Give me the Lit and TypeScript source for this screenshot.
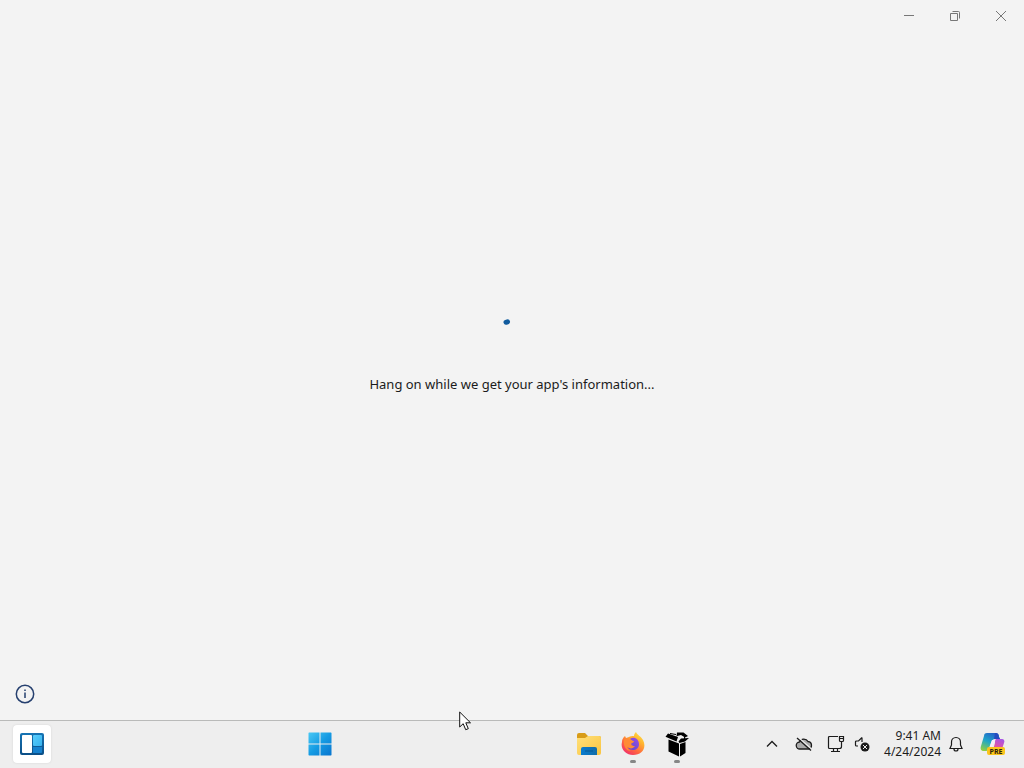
import { LitElement, html, css } from "lit";
import { customElement } from "lit/decorators.js";

@customElement("window-controls")
class WindowControls extends LitElement {
  static styles = css`
    :host { display: flex; justify-content: flex-end; height: 32px; }
    .control { display: grid; place-items: center; width: 46px; padding: 0; border: 0; background: none; }
    .control:hover { background: #e5e5e5; }
    svg { display: block; fill: none; stroke: #777; stroke-width: 1; }
  `;
  render() {
    return html`
      <button class="control" aria-label="Minimize"><svg width="12" height="12"><path d="M1 5.5h10" /></svg></button>
      <button class="control" aria-label="Restore"><svg width="12" height="12"><path d="M1.500 3.500h7v7h-7zM3.500 1.500h6q1 0 1 1v6" /></svg></button>
      <button class="control" aria-label="Close"><svg width="12" height="12"><path d="M1 1l10 10M11 1L1 11" /></svg></button>
    `;
  }
}

@customElement("task-bar")
class TaskBar extends LitElement {
  static styles = css`
    :host {
      display: flex; align-items: center; height: 45px; padding: 0 10px 2px 13px;
      border-top: 1px solid #b9bab9; background: #eee; color: #1c1c1c;
      font-family: "Segoe UI", "Noto Sans", sans-serif;
    }
    button { display: grid; place-items: center; padding: 0; border: 0; background: none; color: inherit; font: inherit; }
    svg { display: block; }
    .widgets { width: 38px; height: 38px; border-radius: 4px; background: #fff; box-shadow: 0 0 2px #d0d0d0; }
    .lead { flex: 13; }
    .search { flex: 0 1 225px; }
    .trail { flex: 3; }
    .app { position: relative; width: 44px; height: 45px; }
    .running::after {
      content: ""; position: absolute; bottom: 3px; left: 19px; width: 6px; height: 3px;
      border-radius: 2px; background: #868686;
    }
    .tray { display: flex; align-items: center; height: 45px; }
    .icon { width: 32px; height: 45px; }
    .narrow { width: 20px; margin-right: 12px; }
    .clock { place-items: center end; font-size: 12px; line-height: 16px; white-space: nowrap; }
    .bell { width: 30px; height: 45px; }
    .copilot { width: 43px; height: 45px; }
    .pre { font: 700 7px "Open Sans", sans-serif; }
  `;
  render() {
    return html`
      <button class="widgets" aria-label="Widgets">
        <svg width="24" height="24" viewBox="0 0 24 24">
          <defs>
            <linearGradient id="wf" x2="0" y2="1"><stop stop-color="#1674b4" /><stop offset="1" stop-color="#0b4e86" /></linearGradient>
            <linearGradient id="wb" x2="1" y2="1"><stop stop-color="#58cdfc" /><stop offset="1" stop-color="#38b3ee" /></linearGradient>
          </defs>
          <rect y="1" width="24" height="22" rx="2" fill="url(#wf)" />
          <rect x="2" y="3" width="10" height="18" rx="1" fill="#fff" />
          <rect x="13" y="3" width="9" height="11" rx="1" fill="url(#wb)" />
          <path d="M13 15h9v5q0 1-1 1h-8z" fill="#1681ce" />
        </svg>
      </button>
      <span class="lead"></span>
      <button class="app" aria-label="Start">
        <svg width="24" height="24" viewBox="0 0 24 24">
          <defs><linearGradient id="win" gradientUnits="userSpaceOnUse" x2="24" y2="24"><stop stop-color="#4bcaf5" /><stop offset=".5" stop-color="#159be3" /><stop offset="1" stop-color="#0873ce" /></linearGradient></defs>
          <path fill="url(#win)" d="M1 .5h10.500V11.500H.5V1zM12.500.5H23l.5.5v10.500h-11zM.5 12.500h11v11H1l-.5-.5zM12.500 12.500h11V23l-.5.5H12.500z" />
        </svg>
      </button>
      <span class="search"></span>
      <button class="app" aria-label="File Explorer">
        <svg width="26" height="24" viewBox="0 0 26 24">
          <defs>
            <linearGradient id="fd" x2="1" y2="1"><stop stop-color="#ffe07a" /><stop offset="1" stop-color="#f9c440" /></linearGradient>
            <linearGradient id="fb" x2="1" y2="0"><stop stop-color="#087bd0" /><stop offset="1" stop-color="#126ca7" /></linearGradient>
          </defs>
          <path d="M1 3q0-2 2-2h6l3 3h11q2 0 2 2v5H1z" fill="#d89c18" />
          <path d="M1 6h8l3-2h11q2 0 2 2v15q0 2-2 2H3q-2 0-2-2z" fill="url(#fd)" />
          <path d="M5 23v-6q0-2 2-2h12q2 0 2 2v6z" fill="url(#fb)" />
          <path d="M9 19h8" stroke="#075995" />
        </svg>
      </button>
      <button class="app running" aria-label="Firefox">
        <svg width="24" height="24" viewBox="0 0 24 24">
          <defs>
            <linearGradient id="ff" x1=".9" y1="0" x2=".2" y2="1"><stop stop-color="#ffe84a" /><stop offset=".35" stop-color="#ffb02e" /><stop offset=".68" stop-color="#ff6541" /><stop offset="1" stop-color="#ef2b6f" /></linearGradient>
            <linearGradient id="fg" x1="1" y1="0" x2="0" y2="1"><stop stop-color="#9b4de8" /><stop offset="1" stop-color="#5649c8" /></linearGradient>
          </defs>
          <path fill="url(#ff)" d="M15 0c1 3 5 4 7 8 4 8-1 15-10 15C5 23-1 17 1 10c0-3 1-4 3-6l1 2 3-1c1-1 3-1 5-1 0-2 1-3 2-4z" />
          <path fill="url(#fg)" d="M9 7c4-3 9 0 9 5 0 4-3 6-6 6-4 0-6-3-6-5 2 2 5 1 6 0-2 0-3-1-3-2l3-2z" />
          <path fill="#ff8b35" d="M3 8c2-2 5-2 6 0 1 1 2 1 4 1 0 2-3 2-3 3 0 2 2 2 4 2-2 3-5 3-8 1 1 2 2 3 4 4-5 0-8-5-7-11z" />
        </svg>
      </button>
      <button class="app running" aria-label="Package Manager">
        <svg width="24" height="26" viewBox="0 0 24 26">
          <path d="M3.500 8.500L14 12.500V25.500L3.500 20.500zM15 13L20.500 11V22L15 25.500z" />
          <path d="M3 2.500l10 3.500-1.500 4.500L.5 5.800zM12 1.500h6.500l4.500 3.500-3 1.500-4-2.500-4.500 1.200zM13.500 10.500l2.500-3 8-.5-4 3.500-5.500 1.500z" />
          <path d="M11 3.500L5 2.500M19.500 9V5" fill="none" stroke="#000" />
        </svg>
      </button>
      <span class="trail"></span>
      <div class="tray">
        <button class="icon" aria-label="Show hidden icons">
          <svg width="12" height="12" fill="none" stroke="#1c1c1c" stroke-width="1.300"><path d="M1 8.500l5-5 5 5" /></svg>
        </button>
        <button class="icon" aria-label="OneDrive not signed in">
          <svg width="18" height="16" viewBox="0 0 18 16" fill="#aaa" stroke="#1c1c1c" stroke-width="1.300">
            <path d="M5 13a3.500 3.500 0 0 1-.5-7A4.700 4.700 0 0 1 13 5.500 3.800 3.800 0 0 1 13.500 13z" />
            <path d="M3.500 1.500l13 11.500" stroke="#eee" /><path d="M2 2l14 12.500" />
          </svg>
        </button>
        <button class="icon" aria-label="Network">
          <svg width="18" height="18" viewBox="0 0 18 18" fill="none" stroke="#1c1c1c" stroke-width="1.200">
            <path d="M11 1.500H2.500q-1 0-1 1v10q0 1 1 1h10q2 0 2-2V7M6.500 13.500v3M10.500 13.500v3M4 16.500h9" />
            <path d="M12.500 1.500h4v4q0 1-1 1h-2q-1 0-1-1zM12.500 3.500h4" />
          </svg>
        </button>
        <button class="icon narrow" aria-label="Volume muted">
          <svg width="16" height="16" viewBox="0 0 16 16">
            <path d="M8 1.500L4.500 5H2.500q-1 0-1 1v3q0 1 1 1h1.500M8 1.500V6" fill="none" stroke="#1c1c1c" stroke-width="1.200" />
            <circle cx="11" cy="11" r="4.500" fill="#1c1c1c" /><path d="M9 9l4 4m0-4l-4 4" stroke="#eee" />
          </svg>
        </button>
        <button class="clock" aria-label="9:41 AM 4/24/2024"><span>9:41 AM</span><span>4/24/2024</span></button>
        <button class="bell" aria-label="Notifications">
          <svg width="16" height="16" viewBox="0 0 16 16" fill="none" stroke="#1c1c1c" stroke-width="1.200">
            <path d="M8 1.500c-3 0-4.500 2-4.500 4.500v3L2 12.500h12L12.500 9V6C12.500 3.500 11 1.500 8 1.500zM6 13q0 2 2 2t2-2" />
          </svg>
        </button>
        <button class="copilot" aria-label="Copilot preview">
          <svg width="26" height="24" viewBox="0 0 26 24">
            <defs>
              <linearGradient id="c1" x1=".7" y1="0" x2=".2" y2="1"><stop stop-color="#245fc8" /><stop offset=".5" stop-color="#1ea6c9" /><stop offset="1" stop-color="#91cf42" /></linearGradient>
              <linearGradient id="c2" x1=".7" y1="0" x2=".3" y2="1"><stop stop-color="#a855e3" /><stop offset=".55" stop-color="#e9549d" /><stop offset="1" stop-color="#ff975a" /></linearGradient>
            </defs>
            <path d="M7 1h9c2 0 3 1 3 4l1 2h-5c-2 0-3 1-4 4l-1 4c-1 3-2 4-4 4H4c-3 0-4-2-3-5L4 4c0-2 1-3 3-3z" fill="url(#c1)" />
            <path d="M15 1c3 0 3 1 4 4l1 2h-6z" fill="#244bbf" />
            <path d="M16 7h6c2 0 3 2 2 4l-3 9c-1 2-2 3-4 3H8c3 0 4-2 5-5l2-7c0-2 0-3 1-4z" fill="url(#c2)" />
            <path d="M12 8h3l-3 8H9z" fill="#f6edf8" />
            <rect x="7" y="15" width="18" height="8" rx="2" fill="#fbc51c" />
            <text class="pre" x="16" y="22" text-anchor="middle" fill="#2b2008">PRE</text>
          </svg>
        </button>
      </div>
    `;
  }
}

@customElement("app-root")
class AppRoot extends LitElement {
  static styles = css`
    :host {
      display: flex; flex-direction: column; height: 100vh; background: #f3f3f3; color: #1b1b1b;
      font-family: "Segoe UI", "Noto Sans", sans-serif;
    }
    .loading { flex: 1; display: flex; flex-direction: column; align-items: center; justify-content: center; gap: 16px; }
    .message { margin: 0; font-size: 13px; line-height: 20px; }
    svg { display: block; }
    .info-row { height: 40px; padding-left: 11px; }
    .info { display: grid; place-items: center; width: 28px; height: 28px; padding: 0; border: 0; background: none; }
    .pointer { position: absolute; left: 459px; top: 711px; pointer-events: none; }
  `;
  render() {
    return html`
      <window-controls></window-controls>
      <main class="loading">
        <svg width="40" height="40" role="img" aria-label="Loading">
          <path d="M14 4.300l1.500-.5" stroke="#105b9e" stroke-width="5" stroke-linecap="round" />
        </svg>
        <p class="message">Hang on while we get your app's information...</p>
      </main>
      <div class="info-row">
        <button class="info" aria-label="About">
          <svg width="20" height="20" fill="none" stroke="#26406f" stroke-width="1.500">
            <circle cx="10" cy="10" r="8.700" /><path d="M10 8.500V14M10 5.500V7" />
          </svg>
        </button>
      </div>
      <task-bar></task-bar>
      <svg class="pointer" width="13" height="20" viewBox="0 0 13 20">
        <path d="M.7 1v15l3.500-3.300 2.500 6 2.600-1-2.500-5.900h4.700z" fill="#fff" stroke="#111" />
      </svg>
    `;
  }
}
